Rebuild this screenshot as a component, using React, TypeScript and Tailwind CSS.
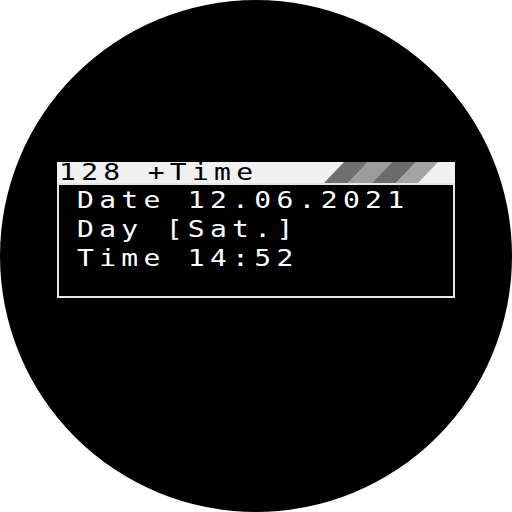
const mono = { fontFamily: '"DejaVu Sans Mono", "Liberation Mono", monospace' };

function Stripes() {
  return (
    <svg width="120" height="21" viewBox="0 0 120 21" className="block">
      <polygon points="20,0 44,0 24,21 0,21" fill="#6f6f6f" />
      <polygon points="44,0 68,0 48,21 24,21" fill="#9c9c9c" />
      <polygon points="68,0 92,0 72,21 48,21" fill="#6b6b6b" />
      <polygon points="92,0 114,0 94,21 72,21" fill="#a3a3a3" />
    </svg>
  );
}

function Line({ text }: { text: string }) {
  return (
    <div className="h-[29px] leading-[29px] whitespace-pre">
      <span className="inline-block origin-center scale-y-[0.8] text-[28px] tracking-[5.3px]">{text}</span>
    </div>
  );
}

export default function App() {
  return (
    <div className="w-[512px] h-[512px] bg-white">
      <div className="w-[512px] h-[512px] rounded-full bg-black pt-[162px] pl-[57px]" style={mono}>
        <div className="w-[398px] flex flex-col">
          <div className="h-[21px] bg-[#f0f0f0] flex items-center justify-between">
            <span className="pl-[2px] text-black text-[28px] leading-[21px] tracking-[5.3px] whitespace-pre inline-block origin-center scale-y-[0.8]">
              128 +Time
            </span>
            <div className="pr-[11px]">
              <Stripes />
            </div>
          </div>
          <div className="h-[115px] bg-black border-2 border-[#e6e6e6] pl-[18px] pt-[1px] text-white">
            <Line text="Date 12.06.2021" />
            <Line text="Day [Sat.]" />
            <Line text="Time 14:52" />
          </div>
        </div>
      </div>
    </div>
  );
}
